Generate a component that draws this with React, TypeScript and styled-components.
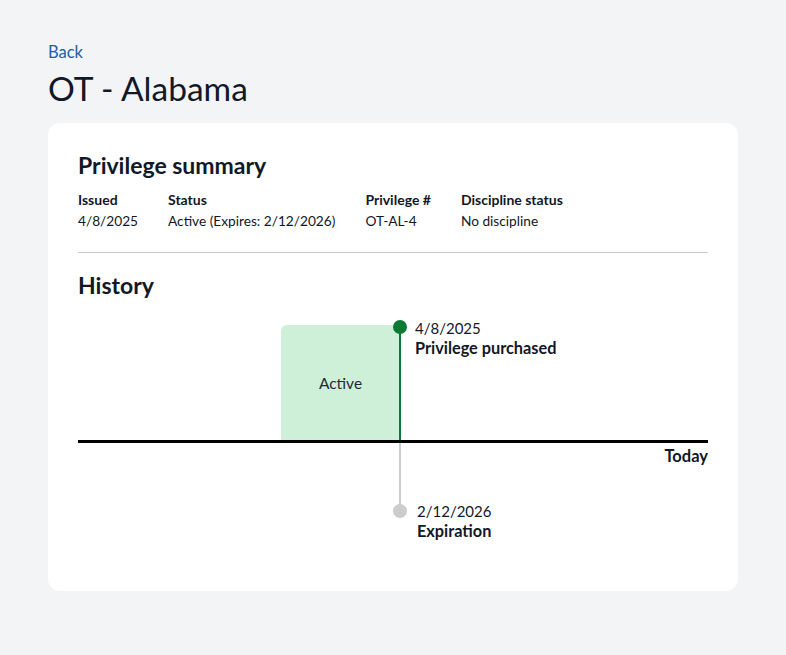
import React from "react";
import styled, { createGlobalStyle } from "styled-components";

const Global = createGlobalStyle`
  html, body { margin: 0; padding: 0; background: #f3f4f6; }
  body { font-family: "Lato", "Noto Sans", sans-serif; color: #111827; }
  * { box-sizing: border-box; }
`;

const Page = styled.div`
  padding: 41px 48px 40px 48px;
  width: 786px;
`;

const BackLink = styled.a`
  display: block;
  color: #1c5ea8;
  font-size: 16.5px;
  line-height: 22px;
  text-decoration: none;
`;

const Title = styled.h1`
  margin: 6px 0 16px 0;
  font-size: 33.5px;
  font-weight: 400;
  line-height: 38px;
  color: #111827;
`;

const Card = styled.div`
  background: #fff;
  border-radius: 12px;
  padding: 28px 30px 30px 30px;
  width: 690px;
`;

const SectionTitle = styled.h2`
  margin: 0;
  font-size: 23px;
  font-weight: 700;
  line-height: 28px;
  color: #111827;
`;

const SummaryRow = styled.div`
  display: flex;
  gap: 30px;
  margin-top: 12px;
`;

const Field = styled.div`
  display: flex;
  flex-direction: column;
  gap: 3px;
  font-size: 13.7px;
  line-height: 18px;
`;

const Label = styled.div`
  font-weight: 700;
  font-size: 14px;
`;

const Value = styled.div`
  font-weight: 400;
`;

const Divider = styled.hr`
  border: none;
  border-top: 1px solid #c8c8c8;
  margin: 22px 0 18px 0;
`;

const Timeline = styled.div`
  position: relative;
  height: 250px;
  margin-top: 12px;
`;

const Axis = styled.div`
  position: absolute;
  left: 0;
  right: 0;
  top: 129px;
  height: 3px;
  background: #000;
`;

const ActiveBox = styled.div`
  position: absolute;
  left: 203px;
  top: 14px;
  width: 119px;
  height: 116px;
  background: #cff0d8;
  border-top-left-radius: 6px;
  display: flex;
  align-items: center;
  justify-content: center;
  font-size: 15.5px;
  color: #1f2937;
`;

const Stem = styled.div<{ $color: string }>`
  position: absolute;
  width: 2px;
  background: ${(p) => p.$color};
`;

const Dot = styled.div<{ $color: string }>`
  position: absolute;
  width: 14px;
  height: 14px;
  border-radius: 50%;
  background: ${(p) => p.$color};
`;

const EventText = styled.div`
  position: absolute;
  display: flex;
  flex-direction: column;
  font-size: 15px;
  line-height: 20px;
  color: #111827;
`;

const EventTitle = styled.div`
  font-weight: 700;
  font-size: 16.3px;
`;

const Today = styled.div`
  position: absolute;
  right: 0;
  top: 135px;
  font-size: 16.5px;
  font-weight: 700;
  line-height: 20px;
`;

export default function App() {
  return (
    <>
      <Global />
      <Page>
        <BackLink href="#">Back</BackLink>
        <Title>OT - Alabama</Title>
        <Card>
          <SectionTitle>Privilege summary</SectionTitle>
          <SummaryRow>
            <Field>
              <Label>Issued</Label>
              <Value>4/8/2025</Value>
            </Field>
            <Field>
              <Label>Status</Label>
              <Value>Active (Expires: 2/12/2026)</Value>
            </Field>
            <Field>
              <Label>Privilege #</Label>
              <Value>OT-AL-4</Value>
            </Field>
            <Field>
              <Label>Discipline status</Label>
              <Value>No discipline</Value>
            </Field>
          </SummaryRow>
          <Divider />
          <SectionTitle>History</SectionTitle>
          <Timeline>
            <ActiveBox>Active</ActiveBox>
            <Stem $color="#0b7a33" style={{ left: 321, top: 16, height: 114 }} />
            <Dot $color="#0b7a33" style={{ left: 315, top: 9 }} />
            <EventText style={{ left: 337, top: 7 }}>
              <span>4/8/2025</span>
              <EventTitle>Privilege purchased</EventTitle>
            </EventText>
            <Axis />
            <Stem $color="#cccccc" style={{ left: 321, top: 132, height: 68 }} />
            <Dot $color="#cccccc" style={{ left: 315, top: 193 }} />
            <EventText style={{ left: 339, top: 190 }}>
              <span>2/12/2026</span>
              <EventTitle>Expiration</EventTitle>
            </EventText>
            <Today>Today</Today>
          </Timeline>
        </Card>
      </Page>
    </>
  );
}
